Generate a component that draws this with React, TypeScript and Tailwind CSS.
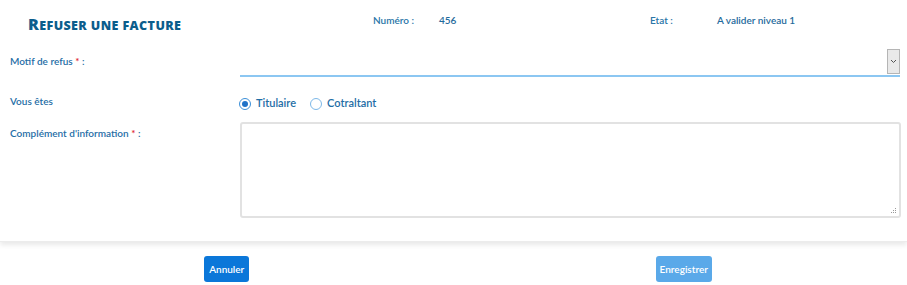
import React, { useState } from "react";

const font = { fontFamily: '"Lato", "Open Sans", sans-serif' };

function Radio({ checked, label, onClick }: { checked: boolean; label: string; onClick: () => void }) {
  return (
    <button type="button" onClick={onClick} className="flex items-center gap-[5px] text-[11px] font-semibold text-[#1f6ea6]">
      <span
        className={
          "w-[12px] h-[12px] rounded-full border flex items-center justify-center " +
          (checked ? "border-[#3b8fd8]" : "border-[#7db8e8]")
        }
      >
        {checked && <span className="w-[6px] h-[6px] rounded-full bg-[#1f72c8]" />}
      </span>
      {label}
    </button>
  );
}

export default function App() {
  const [role, setRole] = useState("titulaire");
  const [motif, setMotif] = useState("");
  const [info, setInfo] = useState("");

  return (
    <div className="w-[907px] h-[285px] bg-white overflow-hidden" style={font}>
      <div className="bg-white shadow-[0_3px_5px_rgba(0,0,0,0.09)] h-[242px] border-b border-[#ececec]">
        {/* header */}
        <div className="flex items-start h-[46px] pt-[13px]">
          <div className="w-[373px] pl-[28px] pt-[2px]">
            <h1
              className="text-[15px] leading-[18px] font-black text-[#0b5d8c] uppercase tracking-[0.4px]"
              style={{ fontFamily: '"Open Sans", "Lato", sans-serif' }}
            >
              <span className="text-[16px]">R</span>
              <span className="text-[12.5px]">efuser une facture</span>
            </h1>
          </div>
          <span className="w-[66px] text-[10px] leading-[14px] font-semibold text-[#2a76a8]">Numéro :</span>
          <span className="w-[211px] text-[10px] leading-[14px] font-semibold text-[#1f6a9c]">456</span>
          <span className="w-[67px] text-[10px] leading-[14px] font-semibold text-[#2a76a8]">Etat :</span>
          <span className="text-[10px] leading-[14px] font-semibold text-[#1f6a9c]">A valider niveau 1</span>
        </div>

        {/* motif */}
        <div className="flex items-center h-[31px]">
          <label className="w-[240px] pl-[10px] text-[10px] font-semibold text-[#1f6ea6]">
            Motif de refus <span className="text-[#e0282e]">*</span> :
          </label>
          <div className="flex-1 mr-[7px] h-[31px] flex items-end border-b-2 border-[#8cc7f2]">
            <select
              value={motif}
              onChange={(e) => setMotif(e.target.value)}
              className="flex-1 h-full bg-transparent appearance-none outline-none text-[11px]"
            >
              <option value=""></option>
            </select>
            <span className="w-[13px] h-[25px] mb-[1px] bg-[#e9e9e9] border border-[#b5b5b5] flex items-center justify-center">
              <svg width="7" height="5" viewBox="0 0 7 5">
                <path d="M1 1l2.5 2.5L6 1" fill="none" stroke="#555" strokeWidth="1" />
              </svg>
            </span>
          </div>
        </div>

        {/* vous êtes */}
        <div className="flex items-center h-[44px] pt-[9px]">
          <span className="w-[239px] pl-[10px] text-[10px] font-semibold text-[#1f6ea6] pb-[4px]">Vous êtes</span>
          <div className="flex items-center gap-[14px]">
            <Radio checked={role === "titulaire"} label="Titulaire" onClick={() => setRole("titulaire")} />
            <Radio checked={role === "cotraitant"} label="Cotraltant" onClick={() => setRole("cotraitant")} />
          </div>
        </div>

        {/* complément */}
        <div className="flex items-start pt-[1px]">
          <label className="w-[240px] pl-[10px] pt-[4px] text-[10px] font-semibold text-[#1f6ea6]">
            Complément d'information <span className="text-[#e0282e]">*</span> :
          </label>
          <div className="relative flex-1 mr-[6px] h-[96px]">
            <textarea
              value={info}
              onChange={(e) => setInfo(e.target.value)}
              className="w-full h-full border-2 border-[#e2e2e2] rounded-[3px] outline-none text-[11px] p-1 resize-none"
            />
            <svg className="absolute right-[4px] bottom-[4px]" width="6" height="6" viewBox="0 0 6 6">
              <rect x="4" y="0" width="1" height="1" fill="#999" />
              <rect x="2" y="2" width="1" height="1" fill="#999" />
              <rect x="4" y="2" width="1" height="1" fill="#999" />
              <rect x="0" y="4" width="1" height="1" fill="#999" />
              <rect x="2" y="4" width="1" height="1" fill="#999" />
              <rect x="4" y="4" width="1" height="1" fill="#999" />
            </svg>
          </div>
        </div>
      </div>

      {/* actions */}
      <div className="grid grid-cols-2 pt-[14px]">
        <div className="flex justify-center">
          <button className="h-[26px] px-[5px] rounded-[3px] bg-[#0b77d9] text-white text-[10px] font-semibold">
            Annuler
          </button>
        </div>
        <div className="flex justify-center pl-[7px]">
          <button disabled className="h-[26px] px-[4px] rounded-[3px] bg-[#5aa9e9] text-white text-[10px] font-semibold">
            Enregistrer
          </button>
        </div>
      </div>
    </div>
  );
}
